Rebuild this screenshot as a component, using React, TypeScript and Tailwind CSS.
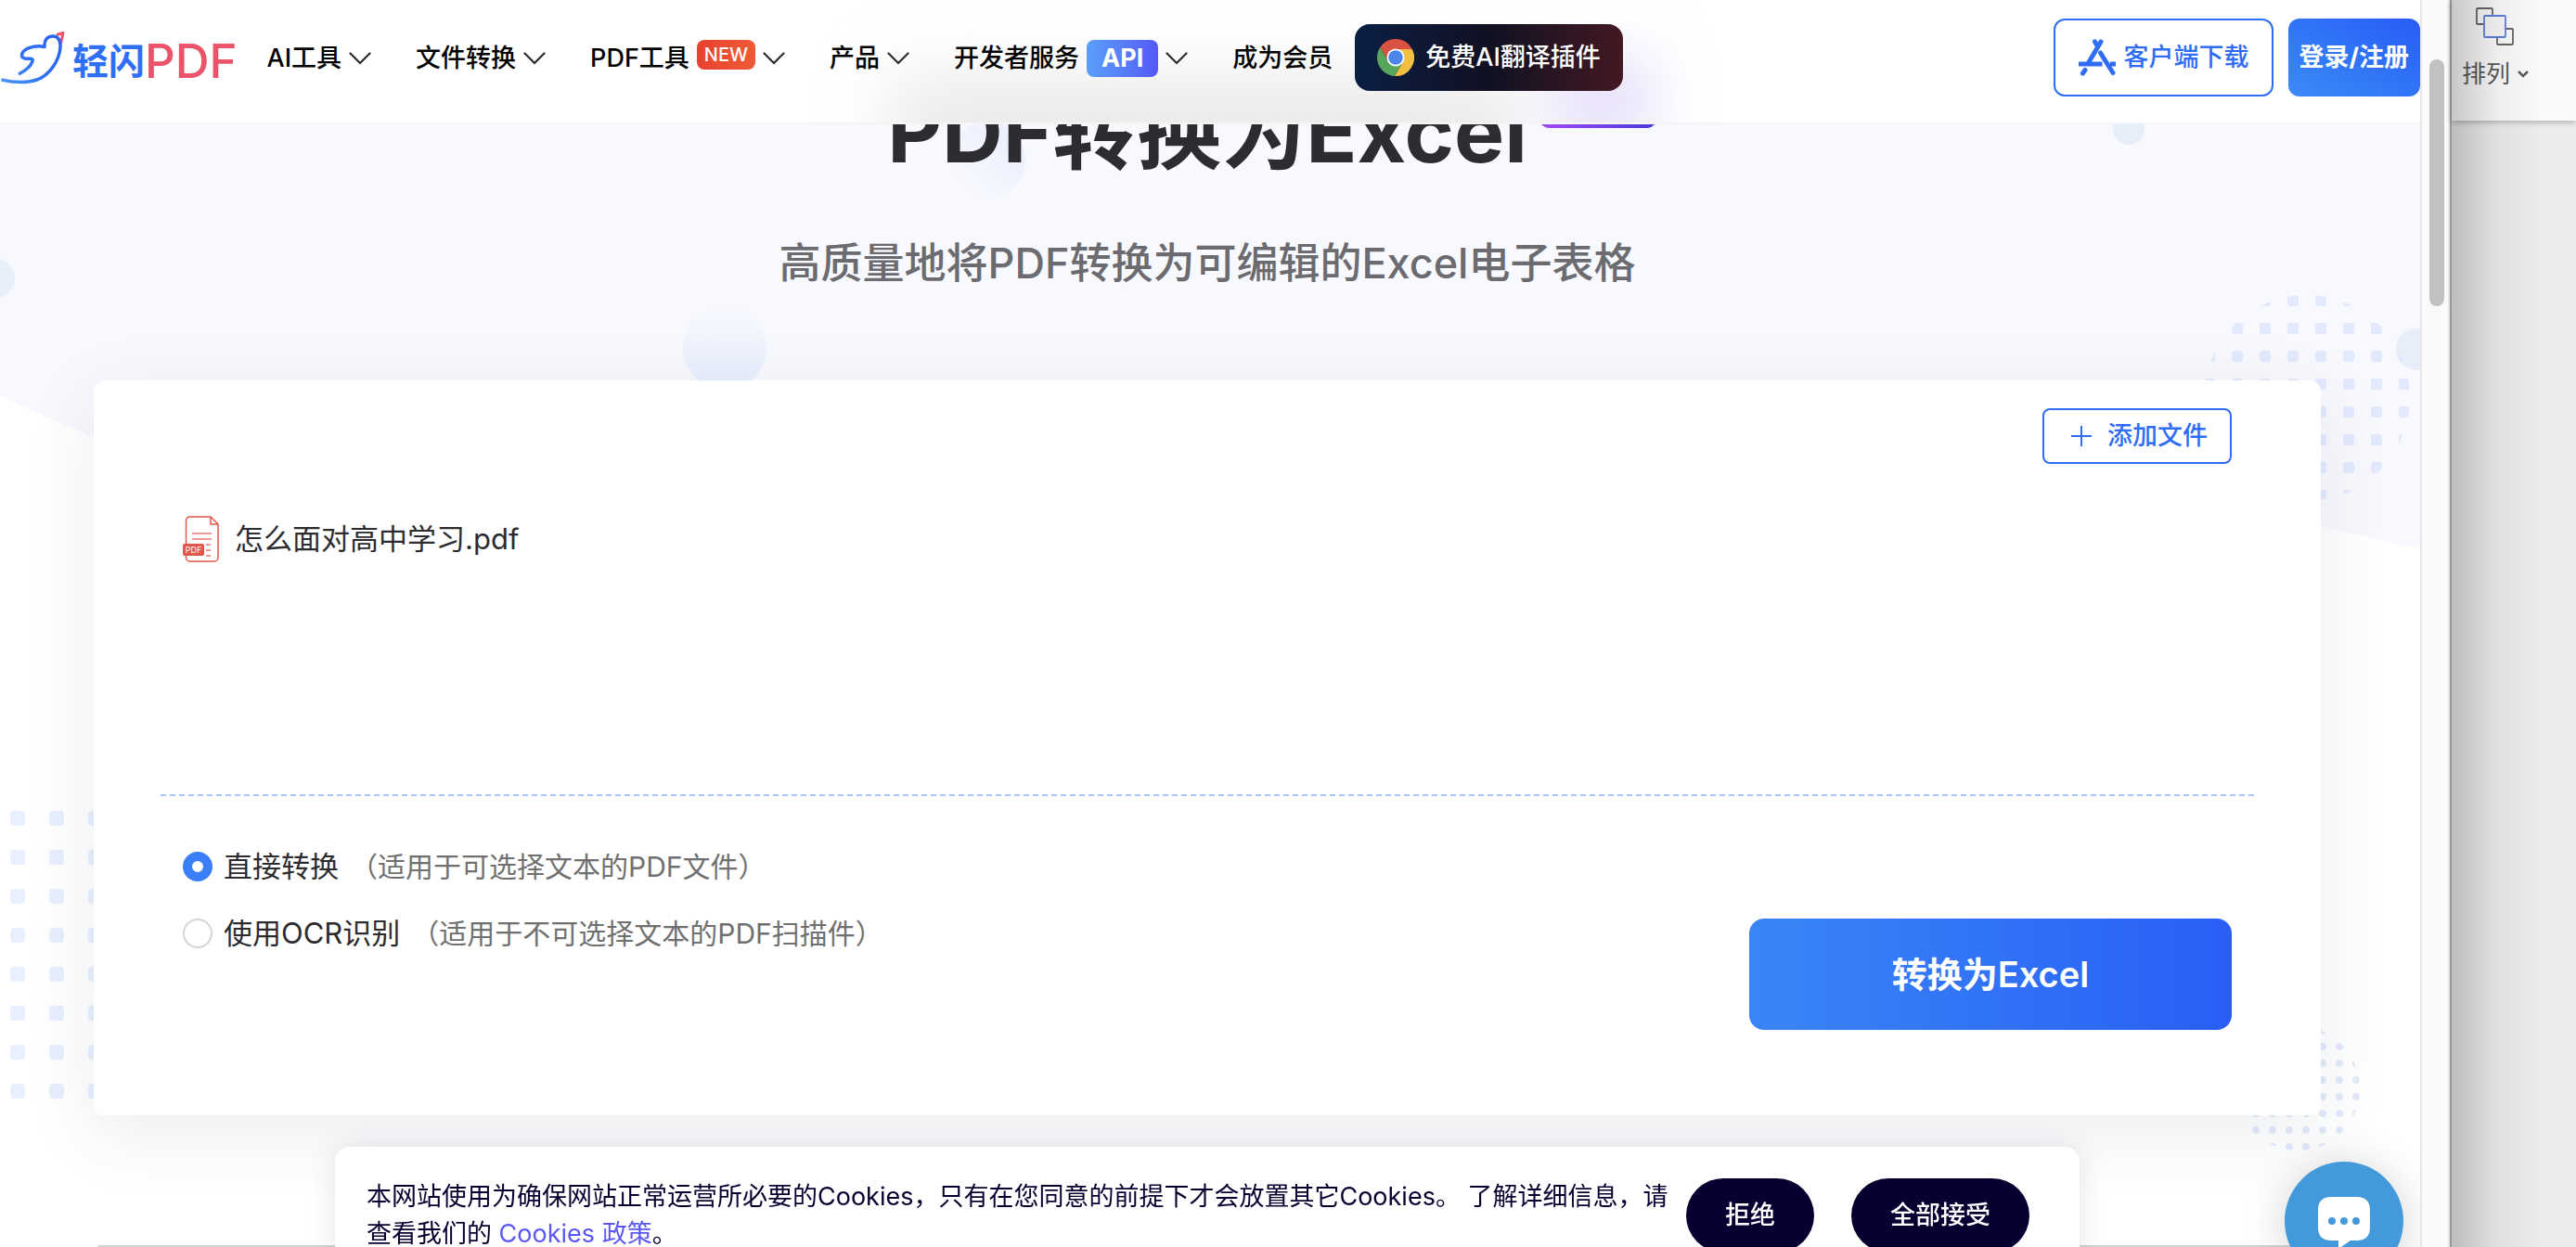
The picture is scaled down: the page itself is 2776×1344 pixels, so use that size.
import clsx from "clsx"
import { useState } from "react"

type NavItem = {
  label: string
  badge?: "new" | "api"
}

const NAV_ITEMS: NavItem[] = [
  { label: "AI工具" },
  { label: "文件转换" },
  { label: "PDF工具", badge: "new" },
  { label: "产品" },
  { label: "开发者服务", badge: "api" },
]

const MODES = [
  { id: "direct", label: "直接转换", hint: "（适用于可选择文本的PDF文件）" },
  { id: "ocr", label: "使用OCR识别", hint: "（适用于不可选择文本的PDF扫描件）" },
]

function BirdIcon() {
  return (
    <svg viewBox="0 0 72 60" className="h-15 w-18 shrink-0" fill="none">
      <defs>
        <linearGradient id="bird" x1="0" y1="60" x2="60" y2="0" gradientUnits="userSpaceOnUse">
          <stop stopColor="#4b9bfa" />
          <stop offset="0.5" stopColor="#2f6ef7" />
          <stop offset="1" stopColor="#2a62f6" />
        </linearGradient>
      </defs>
      <path d="M61 5.500 68 3.500 65.500 15" stroke="#e9546b" strokeWidth="3" strokeLinejoin="round" />
      <path
        d="M20 48c6-3 13-8 15-14 .6-1.800-.5-3-2.500-2.800-4 .4-9.500-.2-9-3.700C24 21 36 16 48 18.500 47.500 11 51 7 57 7c5.500 0 8.500 4.500 8 12-1 14-11 29-24 34.500-12 4.500-26 3.500-39.500.5"
        stroke="url(#bird)"
        strokeWidth="3.500"
        strokeLinejoin="round"
      />
    </svg>
  )
}

function ChevronIcon() {
  return (
    <svg viewBox="0 0 24 14" className="h-3.5 w-6 shrink-0" fill="none">
      <path d="M1.500 1.500 12 12 22.500 1.500" stroke="#2b2b30" strokeWidth="2.200" strokeLinecap="round" />
    </svg>
  )
}

function ChromeIcon() {
  return (
    <svg viewBox="2 2 44 44" className="size-10 shrink-0">
      <path d="M5.540 12.030A22 22 0 0 1 43.600 14H24L15.340 29Z" fill="#d95140" />
      <path d="M43.600 14A22 22 0 0 1 22.860 45.970L32.660 29 24 14Z" fill="#f2bf42" />
      <path d="M22.860 45.970A22 22 0 0 1 5.540 12.030L15.340 29H32.660Z" fill="#58a55c" />
      <circle cx="24" cy="24" r="10.500" fill="#fff" />
      <circle cx="24" cy="24" r="8.500" fill="#4d86ea" />
    </svg>
  )
}

function AppStoreIcon() {
  return (
    <svg viewBox="0 0 42 40" className="h-10 w-[42px] shrink-0" fill="none" stroke="#2f6df6" strokeLinecap="round">
      <path d="M25 3 12 25" strokeWidth="5" />
      <path d="M18.500 3 21.500 8M24.500 15 38 36.500" strokeWidth="5" />
      <path d="M8 33.500 5.500 37" strokeWidth="5" />
      <path d="M1 27H26.500M35 27H41" strokeWidth="5" strokeLinecap="butt" />
    </svg>
  )
}

function PdfFileIcon() {
  return (
    <svg viewBox="0 0 40 50" className="h-[50px] w-10 shrink-0" fill="none">
      <path
        d="M3.500 30V5a4 4 0 0 1 4-4H30L38 9V45a4 4 0 0 1-4 4H7.500a4 4 0 0 1-4-4V42M30 1V9H38"
        stroke="#e2574c"
        strokeWidth="1.500"
      />
      <path d="M10 19H31M10 25H31M25 31H30M25 37H30M25 43H30" stroke="#ea7a71" strokeWidth="1.500" />
      <rect x="0" y="30" width="23" height="13" rx="2" fill="#e2574c" />
      <text x="11.500" y="40" textAnchor="middle" fontSize="9" fill="#fff" fontFamily="Inter, sans-serif">
        PDF
      </text>
    </svg>
  )
}

function ArrangeIcon() {
  return (
    <svg viewBox="0 0 42 42" className="size-[42px]" fill="none" strokeWidth="1.800">
      <rect x="1" y="1" width="17" height="17" rx="1" stroke="#666" />
      <rect x="23" y="23" width="17" height="17" rx="1" stroke="#666" />
      <rect x="9" y="9" width="23" height="23" rx="1" fill="#f6f6f6" stroke="#5f7fd9" />
    </svg>
  )
}

function ChatIcon() {
  return (
    <svg viewBox="0 0 56 62" className="h-[62px] w-14">
      <path
        d="M14 0H42C51 0 56 5 56 14V33C56 42 51 47 42 47H35L22 56V47H14C5 47 0 42 0 33V14C0 5 5 0 14 0Z"
        fill="#fff"
      />
      <g fill="#4499da">
        <circle cx="15" cy="26" r="4" />
        <circle cx="28" cy="26" r="4" />
        <circle cx="41" cy="26" r="4" />
      </g>
    </svg>
  )
}

function Backdrop() {
  return (
    <div className="pointer-events-none absolute inset-0 overflow-hidden" aria-hidden="true">
      <div className="h-[740px] bg-[#f8f9fe] [clip-path:polygon(0_0,100%_0,100%_80%,73%_58%,27%_100%,0_57.7%)]" />
      <div className="absolute top-[279px] -left-[26px] size-[42px] rounded-full bg-[#e7effb]" />
      <div className="absolute top-[122px] right-[297px] size-[34px] rounded-full bg-[#e7eefa]" />
      <div className="absolute top-[354px] -right-[19px] size-[45px] rounded-full bg-[#e7eefa]" />
      <div className="absolute top-[330px] left-[736px] size-[90px] rounded-full bg-linear-to-b from-[#f8f9fe] to-[#e6edfc]" />
      <div className="absolute top-[131px] left-[1022px] size-[83px] rounded-full bg-linear-to-tr from-[#f8f9fe] from-20% to-[#e6edfe]" />

      <svg className="absolute top-[318px] right-[11px] h-[222px] w-[222px]" viewBox="0 0 222 222">
        <defs>
          <pattern id="dots-lg" x="0" y="0" width="30" height="30" patternUnits="userSpaceOnUse">
            <rect width="12" height="12" rx="3" fill="#e3e9fd" />
          </pattern>
        </defs>
        <circle cx="111" cy="111" r="111" fill="url(#dots-lg)" />
      </svg>

      <svg className="absolute top-[1106px] right-[65px] size-[134px]" viewBox="0 0 134 134">
        <defs>
          <pattern id="dots-sm" x="0" y="0" width="18" height="18" patternUnits="userSpaceOnUse">
            <circle cx="4" cy="4" r="4" fill="#e3eafb" />
          </pattern>
        </defs>
        <circle cx="67" cy="67" r="67" fill="url(#dots-sm)" />
      </svg>

      <svg className="absolute top-[874px] left-[11px] h-[310px] w-[102px]" viewBox="0 0 102 310">
        <defs>
          <pattern id="dots-left" width="42" height="42" patternUnits="userSpaceOnUse">
            <rect width="16" height="16" rx="4" fill="#e8f0ff" />
          </pattern>
        </defs>
        <rect width="102" height="310" fill="url(#dots-left)" />
      </svg>
    </div>
  )
}

function Header() {
  return (
    <header className="sticky top-0 z-10 flex h-[134px] items-start border-b-2 border-[#f4f5f7] bg-white text-[27px] leading-9 font-medium text-black">
      {/* frosted tint of the title and its tag */}
      <div className="pointer-events-none absolute inset-0 -z-10 overflow-hidden" aria-hidden="true">
        <div className="absolute -bottom-12 left-[960px] h-24 w-[680px] bg-[#e9e9e9] blur-[36px]" />
        <div className="absolute -bottom-6 left-[1670px] h-24 w-28 bg-[#e8e1fb] blur-[30px]" />
      </div>

      <a href="#" className="flex shrink-0 items-start pt-8">
        <BirdIcon />
        <span className="ml-1.5 text-[39px] leading-[68px] font-bold text-[#2f6ef7]">轻闪</span>
        <span className="text-[51px] leading-[68px] text-[#e9546b]">PDF</span>
      </a>

      <nav className="mt-[26px] ml-8 flex h-[74px] shrink-0 items-center gap-12">
        {NAV_ITEMS.map((item) => (
          <button key={item.label} type="button" className="flex items-center gap-2 whitespace-nowrap">
            <span>{item.label}</span>
            {item.badge === "new" && (
              <span className="mb-2 h-8 rounded-lg bg-linear-to-r from-[#e8412f] to-[#ee5a35] px-2 text-xl leading-8 text-white">
                NEW
              </span>
            )}
            {item.badge === "api" && (
              <span className="h-10 rounded-lg bg-linear-to-r from-[#5b9ffb] to-[#5558f5] px-4 leading-10 font-bold text-white">
                API
              </span>
            )}
            <ChevronIcon />
          </button>
        ))}
        <a href="#" className="whitespace-nowrap">
          成为会员
        </a>
      </nav>

      <a
        href="#"
        className="mt-[26px] ml-6 flex h-[72px] shrink-0 items-center gap-3 rounded-2xl bg-linear-to-r from-[#0a1f44] via-[#101022] to-[#431822] px-6 whitespace-nowrap text-white"
      >
        <ChromeIcon />
        免费AI翻译插件
      </a>

      <div className="mt-5 ml-auto flex shrink-0 gap-4">
        <a
          href="#"
          className="flex h-[84px] items-center gap-2 rounded-xl border-2 border-[#2f6df6] bg-white px-6 whitespace-nowrap text-[#2f6df6]"
        >
          <AppStoreIcon />
          客户端下载
        </a>
        <button
          type="button"
          className="h-[84px] rounded-xl bg-linear-to-tr from-[#3d8af7] to-[#285cf5] px-3 font-bold whitespace-nowrap text-white"
        >
          登录/注册
        </button>
      </div>
    </header>
  )
}

function ConvertCard() {
  const [mode, setMode] = useState("direct")

  return (
    <section className="relative mt-24 mr-[107px] ml-[101px] rounded-xl bg-white pt-[30px] pb-[92px] shadow-[0_20px_80px_rgba(30,50,90,0.09)]">
      <div className="flex justify-end px-24">
        <button
          type="button"
          className="flex h-[60px] items-center gap-4 rounded-lg border-2 border-[#2f6df6] px-6 text-[27px] font-medium text-[#2f6df6]"
        >
          <svg viewBox="0 0 24 24" className="ml-1 size-6" stroke="currentColor" strokeWidth="2">
            <path d="M12 1V23M1 12H23" />
          </svg>
          添加文件
        </button>
      </div>

      <div className="mt-14 flex h-[300px] items-start px-24">
        <div className="flex items-center gap-4 text-[31px] leading-[50px] text-[#2b2b30]">
          <PdfFileIcon />
          怎么面对高中学习.pdf
        </div>
      </div>

      <div className="mx-[72px] border-t-2 border-dashed border-[#a9c3fc]" />

      <div className="flex items-start justify-between px-24">
        <fieldset className="mt-[52px] flex flex-col gap-6 leading-12">
          {MODES.map((item) => (
            <label key={item.id} className="flex items-center gap-3">
              <input
                type="radio"
                name="mode"
                value={item.id}
                checked={mode === item.id}
                onChange={() => setMode(item.id)}
                className={clsx(
                  "size-8 shrink-0 appearance-none rounded-full bg-white",
                  mode === item.id ? "border-10 border-[#3a7ff8]" : "border-2 border-[#d4d4d4]",
                )}
              />
              <span className="text-[31px] text-[#2b2b30]">{item.label}</span>
              <span className="text-[30px] text-[#707070]">{item.hint}</span>
            </label>
          ))}
        </fieldset>

        <button
          type="button"
          className="mt-[132px] h-[120px] w-[520px] rounded-2xl bg-linear-to-r from-[#3b85f7] to-[#295ef5] text-[38px] font-semibold text-white"
        >
          转换为Excel
        </button>
      </div>
    </section>
  )
}

function CookieBanner() {
  return (
    <aside className="absolute right-[367px] -bottom-10 left-[361px] z-20 flex items-center gap-3 rounded-2xl bg-white py-[34px] pr-[54px] pl-[34px] text-[27px] leading-10 text-[#05002f] shadow-[0_0_32px_rgba(10,10,60,0.1)]">
      <p className="min-w-0 flex-1">
        本网站使用为确保网站正常运营所必要的Cookies，只有在您同意的前提下才会放置其它Cookies。 了解详细信息，请查看我们的{" "}
        <a href="#" className="text-[#5b57f5]">
          Cookies 政策
        </a>
        。
      </p>
      <div className="flex shrink-0 gap-10 font-medium text-white">
        <button type="button" className="h-20 rounded-full bg-[#05002f] px-[42px]">
          拒绝
        </button>
        <button type="button" className="h-20 rounded-full bg-[#05002f] px-[42px]">
          全部接受
        </button>
      </div>
    </aside>
  )
}

export default function App() {
  return (
    <div className="flex h-screen overflow-hidden bg-white font-['Inter','Noto_Sans_CJK_SC',sans-serif]">
      <div className="relative min-w-0 flex-1 overflow-hidden">
        <Backdrop />
        <Header />

        <main className="relative">
          <div className="-mt-10 mr-1.5 text-center">
            <h1 className="relative inline-block text-[91px] leading-24 font-bold text-[#2d2c31]">
              PDF转换为Excel
              <span className="absolute -top-3 left-full ml-3 h-14 w-32 rounded-xl bg-linear-to-r from-[#a347f5] to-[#4738d8]" />
            </h1>
            <p className="mt-16 text-[45px] leading-15 font-medium text-[#6b6b70]">
              高质量地将PDF转换为可编辑的Excel电子表格
            </p>
          </div>
          <ConvertCard />
        </main>

        <div className="absolute right-[120px] bottom-0 left-[105px] h-0.5 rounded-t bg-[#d4d4d6]" />
        <CookieBanner />
        <button
          type="button"
          aria-label="在线客服"
          className="absolute right-[18px] -bottom-9 z-20 flex size-32 justify-center rounded-full bg-[#4499da] pt-[38px] shadow-[0_4px_48px_rgba(0,0,0,0.18)]"
        >
          <ChatIcon />
        </button>
      </div>

      {/* scroll track */}
      <div className="w-8 shrink-0 border-x-2 border-[#e6e6e7] bg-[#fafafa] pt-16 pr-1">
        <div className="ml-auto h-[266px] w-4 rounded-full bg-[#c1c1c1]" />
      </div>

      {/* window behind the browser */}
      <div className="relative w-[136px] shrink-0 border-l-2 border-[#999] bg-[#ececec]">
        <div className="flex h-[130px] flex-col items-center bg-[#fafafa] pt-2 pr-10 shadow-[0_2px_6px_rgba(0,0,0,0.25)]">
          <ArrangeIcon />
          <button type="button" className="mt-3 flex items-center gap-2 text-[26px] leading-9 whitespace-nowrap text-[#5a5a5a]">
            排列
            <svg viewBox="0 0 12 8" className="h-2 w-3" fill="none" stroke="#5a5a5a" strokeWidth="2.500">
              <path d="M1 1 6 6 11 1" />
            </svg>
          </button>
        </div>
        <div className="pointer-events-none absolute inset-y-0 left-0 w-24 bg-linear-to-r from-black/20 via-black/5 to-transparent" />
      </div>
    </div>
  )
}
